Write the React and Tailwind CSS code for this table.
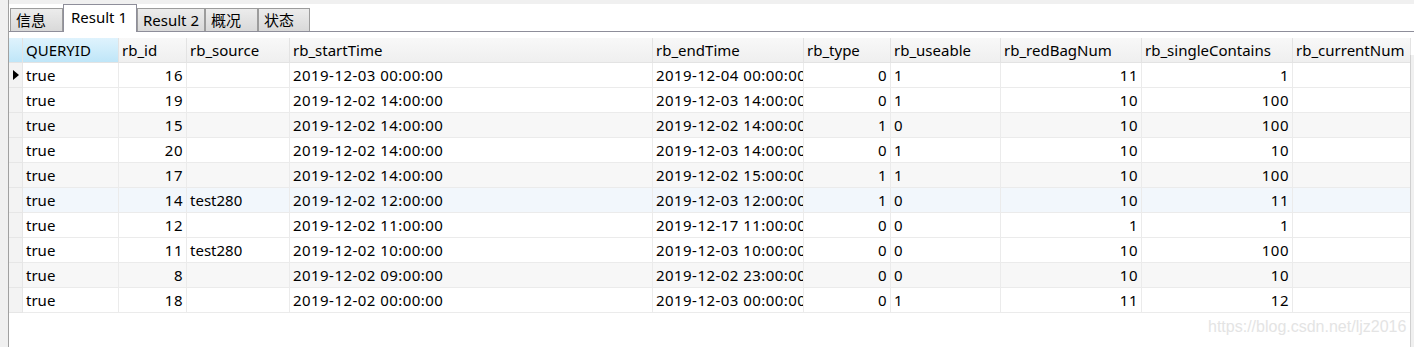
const columns = [
  { key: 'q', label: 'QUERYID', w: 96 },
  { key: 'id', label: 'rb_id', w: 68, right: true },
  { key: 'src', label: 'rb_source', w: 103 },
  { key: 'start', label: 'rb_startTime', w: 363, date: true },
  { key: 'end', label: 'rb_endTime', w: 151, date: true },
  { key: 'type', label: 'rb_type', w: 87, right: true },
  { key: 'use', label: 'rb_useable', w: 110 },
  { key: 'num', label: 'rb_redBagNum', w: 141, right: true },
  { key: 'single', label: 'rb_singleContains', w: 151, right: true },
  { key: 'cur', label: 'rb_currentNum', w: 118 },
]

const rows = [
  ['true', '16', '', '2019-12-03 00:00:00', '2019-12-04 00:00:00', '0', '1', '11', '1', ''],
  ['true', '19', '', '2019-12-02 14:00:00', '2019-12-03 14:00:00', '0', '1', '10', '100', ''],
  ['true', '15', '', '2019-12-02 14:00:00', '2019-12-02 14:00:00', '1', '0', '10', '100', ''],
  ['true', '20', '', '2019-12-02 14:00:00', '2019-12-03 14:00:00', '0', '1', '10', '10', ''],
  ['true', '17', '', '2019-12-02 14:00:00', '2019-12-02 15:00:00', '1', '1', '10', '100', ''],
  ['true', '14', 'test280', '2019-12-02 12:00:00', '2019-12-03 12:00:00', '1', '0', '10', '11', ''],
  ['true', '12', '', '2019-12-02 11:00:00', '2019-12-17 11:00:00', '0', '0', '1', '1', ''],
  ['true', '11', 'test280', '2019-12-02 10:00:00', '2019-12-03 10:00:00', '0', '0', '10', '100', ''],
  ['true', '8', '', '2019-12-02 09:00:00', '2019-12-02 23:00:00', '0', '0', '10', '10', ''],
  ['true', '18', '', '2019-12-02 00:00:00', '2019-12-03 00:00:00', '0', '1', '11', '12', ''],
]

const rowBg = (i) => {
  if (i === 5) return 'bg-[#f2f7fc]'
  if (i === 2 || i === 4 || i === 8) return 'bg-[#f7f7f7]'
  return 'bg-white'
}

const tabs = [
  { label: '信息', w: 53 },
  { label: 'Result 1', w: 74, active: true },
  { label: 'Result 2', w: 68 },
  { label: '概况', w: 53 },
  { label: '状态', w: 52 },
]

export default function App() {
  return (
    <div
      className="relative w-[1414px] h-[347px] flex bg-[#f0f0f0] text-[15px] text-black overflow-hidden"
      style={{ fontFamily: '"Noto Sans", "Noto Sans CJK SC", sans-serif' }}
    >
      {/* left strip */}
      <div className="w-[9px] shrink-0 border-r border-[#a0a0a0]" />

      <div className="flex-1 flex flex-col pt-[4px]">
        {/* tab bar */}
        <div className="h-[28px] bg-white border-b border-[#8e8e9a] flex items-end pl-[1px]">
          {tabs.map((t) =>
            t.active ? (
              <div
                key={t.label}
                style={{ width: t.w }}
                className="h-[28px] -mb-px bg-white border border-b-0 border-[#8e8e9a] flex items-center pl-[7px] pb-[2px] leading-none whitespace-nowrap"
              >
                {t.label}
              </div>
            ) : (
              <div
                key={t.label}
                style={{ width: t.w }}
                className="h-[23px] bg-gradient-to-b from-[#ececec] to-[#d9d9d9] border border-b-0 border-[#9c9c9c] flex items-center pl-[5px] leading-none whitespace-nowrap overflow-hidden"
              >
                {t.label}
              </div>
            )
          )}
        </div>

        {/* grid area */}
        <div className="flex-1 bg-white pt-[6px] flex">
          <div className="w-[1401px] shrink-0">
            {/* header */}
            <div className="flex h-[25px]">
              <div className="w-[14px] shrink-0 bg-gradient-to-b from-[#dff3fd] to-[#bfe6f8] border-r border-b border-[#e3e3e3]" />
              {columns.map((c, ci) => (
                <div
                  key={c.key}
                  style={{ width: c.w }}
                  className={`shrink-0 flex items-center pl-[3px] border-r border-b border-[#e3e3e3] whitespace-nowrap overflow-hidden ${
                    ci === 0 ? 'bg-gradient-to-b from-[#dff3fd] to-[#bfe6f8]' : 'bg-gradient-to-b from-[#f8f8f8] to-[#efefef]'
                  }`}
                >
                  {c.label}
                </div>
              ))}
            </div>

            {/* rows */}
            {rows.map((r, ri) => (
              <div key={ri} className={`flex h-[25px] ${rowBg(ri)}`}>
                <div className="w-[14px] shrink-0 bg-[#f3f3f3] border-r border-b border-[#e6e6e6] flex items-center justify-center">
                  {ri === 0 && (
                    <svg width="6" height="10" viewBox="0 0 6 10">
                      <path d="M0 0 L6 5 L0 10 Z" fill="#000" />
                    </svg>
                  )}
                </div>
                {columns.map((c, ci) => (
                  <div
                    key={c.key}
                    style={{ width: c.w }}
                    className={`shrink-0 flex items-center border-r border-b border-[#ebebeb] whitespace-nowrap overflow-hidden ${
                      c.right ? 'justify-end pr-[3px] tracking-[0.5px]' : 'pl-[3px]'
                    } ${c.date ? 'tracking-[0.45px]' : ''}`}
                  >
                    {r[ci]}
                  </div>
                ))}
              </div>
            ))}
          </div>
          <div className="flex-1 border-l border-[#d0d0d0] bg-[#f0f0f0] mt-[17px]" />
        </div>
      </div>

      <div
        className="absolute left-[1208px] top-[319px] text-[16px] text-[#e4e4e4] leading-none whitespace-nowrap"
        style={{ fontFamily: '"Liberation Sans", Arial, sans-serif' }}
      >
        https://blog.csdn.net/ljz2016
      </div>
    </div>
  )
}
